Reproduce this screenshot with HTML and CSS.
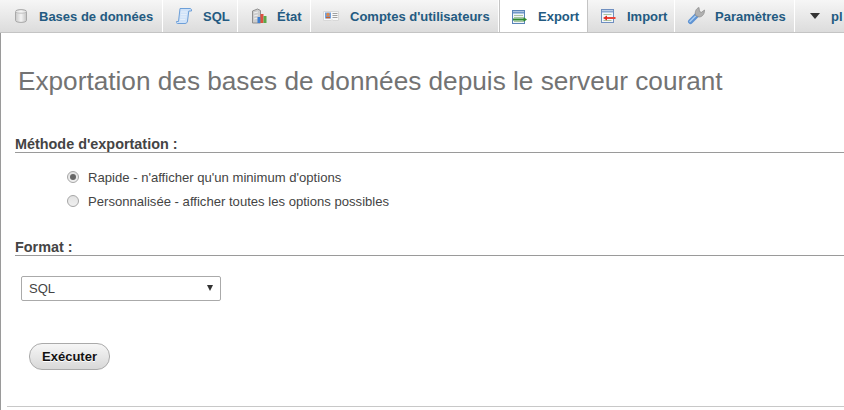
FILE: index.html
```html
<!DOCTYPE html>
<html lang="fr">
<head>
<meta charset="utf-8">
<title>Export</title>
<link rel="stylesheet" href="styles.css">
</head>
<body>
<nav class="tabs">
  <a class="tab t1"><svg class="ico" viewBox="0 0 16 16"><defs><linearGradient id="db" x1="0" x2="1" y1="0" y2="0"><stop offset="0" stop-color="#c8c8c8"/><stop offset=".5" stop-color="#f4f4f4"/><stop offset="1" stop-color="#c4c4c4"/></linearGradient></defs><path d="M2.500 3.500c0-2.500 11-2.500 11 0v9c0 2.500-11 2.500-11 0z" fill="url(#db)" stroke="#a8a8a8"/><path d="M2.500 3.500c0 2.200 11 2.200 11 0" fill="#f8f8f8" stroke="#bcbcbc"/></svg>Bases de données</a>
  <a class="tab t2"><svg class="ico" viewBox="0 0 16 16"><path d="M4 .5h10c1.200 0 1.700 1 1.500 2.500h-2.700l-1.300 10c-.2 1.500-1 2.500-2.500 2.500H1.500C.5 15.500 0 14.500.5 13.500h2z" fill="#cfe2f8" stroke="#6d9fd8"/><path d="M5 4h6M4.800 6.500h6M4.500 9h6M4.200 11.500h5" stroke="#e4eefa"/></svg>SQL</a>
  <a class="tab t3"><svg class="ico" viewBox="0 0 16 16"><path d="M1.500 3l5-2 3 1.500V15h-8z" fill="#cdcdcd" stroke="#8f8f8f"/><path d="M3 5l4-1M3 8l4-1M3 11l4-1" stroke="#f0f0f0"/><rect x="6.500" y="9" width="3" height="6" fill="#3f7fd0"/><rect x="9.500" y="6" width="3" height="9" fill="#dd5040"/><rect x="12.500" y="8" width="3" height="7" fill="#5aa848"/></svg>État</a>
  <a class="tab t4"><svg class="ico" viewBox="0 0 16 16"><path d="M.5 3.500h15v9h-5.500c-.3-1-1.700-1-2 0H.5z" fill="#f8f8f8" stroke="#d8d8d8"/><rect x="2" y="4.500" width="6" height="6" fill="#6f9fdc"/><circle cx="5" cy="6.500" r="1.700" fill="#e0894a"/><path d="M3 9.500h4" stroke="#c9622a" stroke-width="1.500"/><path d="M9.500 5.500h5M9.500 7.500h5M9.500 9.500h5" stroke="#a0a0a0"/></svg>Comptes d'utilisateurs</a>
  <a class="tab t5 active"><svg class="ico" viewBox="0 0 16 16"><rect x="1.500" y="1.500" width="12" height="13" fill="#eef4fa" stroke="#5a84b8"/><path d="M2 3.500h11" stroke="#6f97c8" stroke-width="2"/><path d="M3 6.500h9M3 8.500h9M3 12.500h9" stroke="#a8c4a0"/><path d="M2 10.500h11" stroke="#2f8a2f" stroke-width="2"/><path d="M12.500 8l3.500 2.500-3.500 2.500z" fill="#2f8a2f"/></svg>Export</a>
  <a class="tab t6"><svg class="ico" viewBox="0 0 16 16"><rect x="1.500" y="1.500" width="12" height="13" fill="#f2f6fb" stroke="#6f8fc0"/><path d="M2 3.500h11" stroke="#8aa8d0" stroke-width="2"/><path d="M3.500 6.500h8M3.500 12.500h8" stroke="#a8c4a0"/><path d="M6 10h9.500" stroke="#e8453a" stroke-width="2"/><path d="M7 7.500l-4 2.500 4 2.500z" fill="#dd2b20"/></svg>Import</a>
  <a class="tab t7"><svg class="ico" viewBox="0 0 18 18"><path d="M3.500 14.500l6-6" stroke="#5f93d3" stroke-width="5" stroke-linecap="round"/><path d="M3 14.500l5.500-5.500" stroke="#a9cdf2" stroke-width="1.500" stroke-linecap="round"/><path d="M8.500 8.500c-1-3.500.5-7 3.500-8l.5 4 2 .8 3-2.300c.3 3.500-2 7-5.500 7z" fill="#b0b0b0" stroke="#8a8a8a" stroke-width=".7"/></svg>Paramètres</a>
  <a class="tab t8"><span class="caret"></span>pl</a>
</nav>
<main class="page">
  <h2 class="title">Exportation des bases de données depuis le serveur courant</h2>
  <form class="form">
    <h3 class="legend legend-method">Méthode d'exportation :</h3>
    <ul class="options">
      <li class="option"><span class="radio checked"></span>Rapide - n'afficher qu'un minimum d'options</li>
      <li class="option"><span class="radio"></span>Personnalisée - afficher toutes les options possibles</li>
    </ul>
    <h3 class="legend legend-format">Format :</h3>
    <div class="select"><span>SQL</span><span class="arrow"></span></div>
    <button class="go" type="button">Exécuter</button>
  </form>
  <hr class="rule">
</main>
</body>
</html>
```

FILE: styles.css
```css
* { box-sizing: border-box; }
html, body { margin: 0; padding: 0; width: 844px; height: 410px; overflow: hidden; background: #fff; }
body { font-family: "Liberation Sans", Arial, sans-serif; color: #444; }

.tabs {
  display: flex;
  height: 33px;
  background: linear-gradient(#f6f6f6, #dcdcdc);
  border-bottom: 1px solid #c4c4c4;
  overflow: hidden;
  white-space: nowrap;
}
.tab {
  display: flex;
  align-items: center;
  flex: none;
  height: 32px;
  font-size: 13px;
  font-weight: bold;
  color: #235a81;
  border-right: 1px solid #fff;
  padding-left: 13px;
}
.tab.active { background: #fff; height: 33px; position: relative; border-left: 1px solid #c4c4c4; border-right: 1px solid #c4c4c4; }
.ico { width: 16px; height: 16px; flex: none; margin-right: 10px; }
.t1 { width: 163px; }
.t2 { width: 75px; padding-left: 13px; }
.t3 { width: 73px; padding-left: 13px; }
.t4 { width: 188px; padding-left: 12px; }
.t5 { width: 89px; padding-left: 11px; }
.t6 { width: 87px; padding-left: 12px; }
.t7 { width: 120px; padding-left: 12px; }
.t8 { flex: 1; padding-left: 15px; border-right: 0; }
.t2 .ico { margin-right: 11px; }
.t3 .ico { margin-right: 10px; }
.t4 .ico { margin-right: 11px; }
.t5 .ico { margin-right: 11px; }
.t6 .ico { margin-right: 11px; }
.t7 .ico { width: 18px; height: 18px; margin-right: 10px; }
.caret {
  width: 0; height: 0;
  border-left: 5px solid transparent;
  border-right: 5px solid transparent;
  border-top: 6px solid #333;
  margin-right: 11px;
}

.page { border-left: 1px solid #9a9a9a; height: 377px; padding-left: 0; display: flex; flex-direction: column; }
.title {
  margin: 32px 0 0 17px;
  font-size: 26.200px;
  line-height: 32px;
  font-weight: normal;
  color: #737373;
  white-space: nowrap;
}
.form { display: flex; flex-direction: column; align-items: flex-start; }
.legend {
  align-self: stretch;
  margin: 0 0 0 14px;
  font-size: 14.400px;
  line-height: 15px;
  font-weight: bold;
  color: #444;
  border-bottom: 1px solid #9a9a9a;
}
.legend-method { margin-top: 40px; }
.legend-format { margin-top: 27px; }
.options { list-style: none; margin: 12px 0 0 66px; padding: 0; }
.option { display: flex; align-items: center; height: 24px; font-size: 13.100px; color: #444; }
.radio {
  width: 12px; height: 12px;
  border-radius: 50%;
  border: 1px solid #a6a6a6;
  background: linear-gradient(#e2e2e2, #f0f0f0);
  margin-right: 9px;
  display: flex; align-items: center; justify-content: center;
}
.radio.checked::after { content: ""; width: 6px; height: 6px; border-radius: 50%; background: #666; }
.select {
  display: flex; justify-content: space-between; align-items: center;
  width: 200px; height: 25px;
  margin: 20px 0 0 20px;
  padding: 0 8px 0 7px;
  border: 1px solid #aaa;
  border-radius: 2px;
  font-size: 13px;
  color: #444;
}
.arrow { width: 0; height: 0; border-left: 3px solid transparent; border-right: 3px solid transparent; border-top: 6px solid #333; margin-right: -1px; margin-top: -1px; }
.go {
  width: 81px; height: 27px;
  margin: 42px 0 0 28px;
  padding: 0;
  border: 1px solid #aaa;
  border-radius: 13px;
  background: linear-gradient(#f6f6f6, #d8d8d8);
  font-family: inherit;
  font-size: 13px;
  font-weight: bold;
  color: #111;
  text-shadow: 0 1px 0 #fff;
}
.rule { margin: 36px 0 0 6px; border: 0; border-top: 1px solid #c8c8c8; height: 0; align-self: stretch; }
```
